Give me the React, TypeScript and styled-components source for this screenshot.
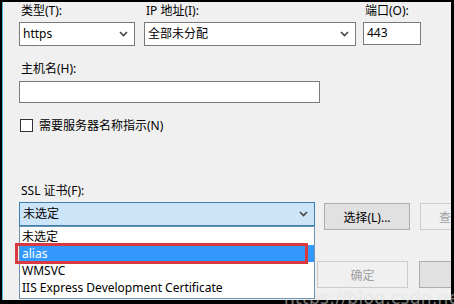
import { FC } from 'react'
import styled, { createGlobalStyle } from 'styled-components'

const GlobalStyle = createGlobalStyle`
  html, body {
    margin: 0;
    padding: 0;
    background: #000;
  }
  body {
    font-family: "Noto Sans", "Noto Sans CJK SC", sans-serif;
    font-size: 12px;
    color: #000;
  }
`

const Chevron: FC = () => (
  <ChevronSvg width="9" height="6" viewBox="0 0 9 6">
    <path d="M1 1 L4.5 4.5 L8 1" fill="none" stroke="#444" strokeWidth="1.6" />
  </ChevronSvg>
)

const items = ['未选定', 'alias', 'WMSVC', 'IIS Express Development Certificate']

const App: FC = () => {
  return (
    <>
      <GlobalStyle />
      <Frame>
        <Panel>
          <BindingRow>
            <Field $width={116}>
              <Label>类型(T):</Label>
              <Select>
                <SelectText>https</SelectText>
                <Chevron />
              </Select>
            </Field>
            <Field $width={212}>
              <Label>IP 地址(I):</Label>
              <Select>
                <SelectText>全部未分配</SelectText>
                <Chevron />
              </Select>
            </Field>
            <Field $width={58}>
              <Label>端口(O):</Label>
              <TextBox $height={23}>443</TextBox>
            </Field>
          </BindingRow>

          <HostBlock>
            <Label>主机名(H):</Label>
            <TextBox $height={22} $width={301} />
          </HostBlock>

          <CheckRow>
            <CheckBox />
            <span>需要服务器名称指示(N)</span>
          </CheckRow>

          <CertBlock>
            <Label>SSL 证书(F):</Label>
            <CertRow>
              <CertSelect>
                <SelectText>未选定</SelectText>
                <Chevron />
                <DropList>
                  {items.map((item, i) => (
                    <DropItem key={item} $active={i === 1}>
                      {item}
                    </DropItem>
                  ))}
                  <Marker />
                </DropList>
              </CertSelect>
              <Button>选择(L)...</Button>
              <Button $disabled>查看(V)...</Button>
            </CertRow>
          </CertBlock>

          <Footer>
            <Button $disabled $wide>确定</Button>
            <Button $wide>取消</Button>
          </Footer>
        </Panel>
        <Watermark>https://blog.csdn.net/qq</Watermark>
      </Frame>
    </>
  )
}

export default App

const Frame = styled.div`
  position: relative;
  width: 454px;
  height: 304px;
  box-sizing: border-box;
  padding: 2px 3px 4px 2px;
  background: #000;
  overflow: hidden;
`

const Panel = styled.div`
  height: 100%;
  box-sizing: border-box;
  background: #f0f0f0;
  border-left: 1px solid #4fb7d6;
  padding: 1px 0 0 16px;
  overflow: hidden;
`

const BindingRow = styled.div`
  display: flex;
  align-items: flex-start;
`

const Field = styled.div<{ $width: number }>`
  display: flex;
  flex-direction: column;
  gap: 3px;
  width: ${p => p.$width}px;
  margin-right: 8px;
  &:nth-child(2) {
    margin-left: 1px;
    margin-right: 7px;
  }
`

const Label = styled.div`
  height: 16px;
  line-height: 16px;
  padding-left: 2px;
  white-space: nowrap;
`

const Select = styled.div`
  display: flex;
  align-items: center;
  justify-content: space-between;
  height: 24px;
  box-sizing: border-box;
  padding: 0 6px 0 3px;
  background: #fff;
  border: 1px solid #7a7a7a;
`

const SelectText = styled.span`
  line-height: 16px;
`

const ChevronSvg = styled.svg`
  display: block;
  flex: none;
`

const TextBox = styled.div<{ $height: number; $width?: number }>`
  height: ${p => p.$height}px;
  width: ${p => (p.$width ? `${p.$width}px` : 'auto')};
  box-sizing: border-box;
  padding: 2px 3px;
  line-height: 16px;
  background: #fff;
  border: 1px solid #7a7a7a;
`

const HostBlock = styled.div`
  display: flex;
  flex-direction: column;
  gap: 4px;
  margin-top: 15px;
`

const CheckRow = styled.div`
  display: flex;
  align-items: center;
  gap: 6px;
  margin-top: 16px;
  padding-left: 1px;
  height: 13px;
  line-height: 16px;
`

const CheckBox = styled.div`
  width: 13px;
  height: 13px;
  box-sizing: border-box;
  background: #fff;
  border: 1px solid #333;
`

const CertBlock = styled.div`
  display: flex;
  flex-direction: column;
  gap: 3px;
  margin-top: 51px;
`

const CertRow = styled.div`
  display: flex;
  align-items: flex-start;
  gap: 9px;
`

const CertSelect = styled(Select)`
  position: relative;
  width: 296px;
  flex: none;
  background: #cce4f7;
  border-color: #3c7fb1;
`

const DropList = styled.div`
  position: absolute;
  z-index: 2;
  top: 23px;
  left: -1px;
  width: 296px;
  box-sizing: border-box;
  padding: 1px 0 2px;
  background: #fff;
  border: 1px solid #6f93ae;
`

const DropItem = styled.div<{ $active?: boolean }>`
  height: 17px;
  line-height: 17px;
  padding-left: 2px;
  white-space: nowrap;
  background: ${p => (p.$active ? '#3399ff' : 'transparent')};
  color: ${p => (p.$active ? '#fff' : '#000')};
`

const Marker = styled.div`
  position: absolute;
  top: 16px;
  left: -5px;
  width: 293px;
  height: 21px;
  box-sizing: border-box;
  border: 3px solid #d93a42;
`

const Button = styled.div<{ $disabled?: boolean; $wide?: boolean }>`
  flex: none;
  width: ${p => (p.$wide ? 91 : 86)}px;
  height: 27px;
  margin-top: 1px;
  box-sizing: border-box;
  display: flex;
  align-items: center;
  justify-content: center;
  white-space: nowrap;
  background: ${p => (p.$disabled ? '#f0f0f0' : '#e1e1e1')};
  border: 1px solid ${p => (p.$disabled ? '#cccccc' : '#adadad')};
  color: ${p => (p.$disabled ? '#a0a0a0' : '#000')};
  & + & {
    margin-left: 1px;
  }
`

const Footer = styled.div`
  display: flex;
  gap: 10px;
  margin-top: 30px;
  padding-left: 298px;
`

const Watermark = styled.div`
  position: absolute;
  left: 284px;
  top: 288px;
  font-family: "DejaVu Sans", sans-serif;
  font-size: 17px;
  letter-spacing: 0.3px;
  white-space: nowrap;
  color: rgba(255, 255, 255, 0.4);
  text-shadow: 0 0 1px rgba(150, 150, 150, 0.25);
  pointer-events: none;
`
